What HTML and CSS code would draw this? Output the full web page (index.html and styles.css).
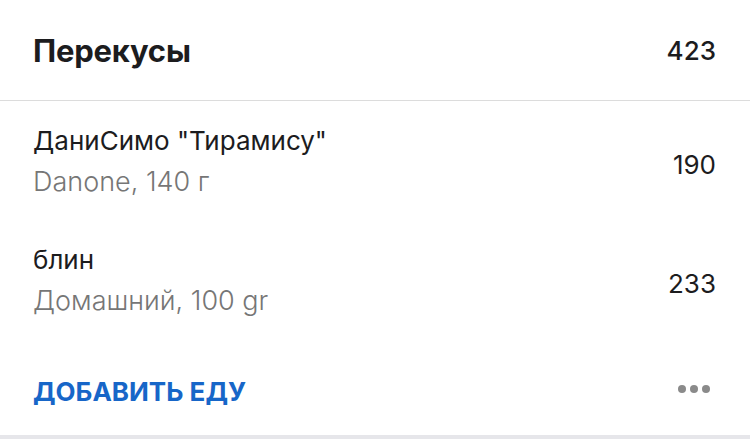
FILE: index.html
```html
<!DOCTYPE html>
<html lang="ru">
<head>
<meta charset="utf-8">
<link rel="stylesheet" href="styles.css">
</head>
<body>
<div class="card">
  <div class="header">
    <span class="meal-title">Перекусы</span>
    <span class="meal-total">423</span>
  </div>
  <div class="item">
    <div class="item-info">
      <div class="item-name">ДаниСимо "Тирамису"</div>
      <div class="item-meta">Danone, 140 г</div>
    </div>
    <div class="item-kcal">190</div>
  </div>
  <div class="item">
    <div class="item-info">
      <div class="item-name">блин</div>
      <div class="item-meta">Домашний, 100 gr</div>
    </div>
    <div class="item-kcal">233</div>
  </div>
  <div class="footer">
    <span class="add-food">ДОБАВИТЬ ЕДУ</span>
    <span class="more"><i></i><i></i><i></i></span>
  </div>
</div>
<div class="below"></div>
</body>
</html>
```

FILE: styles.css
```css
html, body {
  margin: 0;
  padding: 0;
  background: #efeff4;
}
body {
  font-family: Inter, "Noto Sans", "Liberation Sans", sans-serif;
  color: #1c1c1e;
}
.card {
  background: #fff;
  height: 435px;
}
.header {
  height: 101px;
  box-sizing: border-box;
  display: flex;
  align-items: center;
  justify-content: space-between;
  padding: 0 34px 0 33px;
  border-bottom: 1px solid #dcdcdc;
}
.meal-title {
  font-size: 31px;
  font-weight: 700;
  letter-spacing: -0.2px;
}
.meal-total {
  font-size: 26px;
  font-weight: 500;
}
.item {
  height: 119px;
  box-sizing: border-box;
  display: flex;
  align-items: center;
  justify-content: space-between;
  padding: 2px 34px 0 33px;
}
.item-name {
  font-size: 26px;
  line-height: 32px;
  margin-bottom: 9px;
}
.item-meta {
  font-size: 27px;
  line-height: 32px;
  color: #767676;
  font-weight: 350;
}
.item-kcal {
  font-size: 26px;
  line-height: 32px;
  padding-top: 6px;
}
.footer {
  height: 95px;
  box-sizing: border-box;
  display: flex;
  align-items: center;
  justify-content: space-between;
  padding: 10px 40px 0 33px;
}
.add-food {
  font-size: 26px;
  font-weight: 700;
  color: #1766c8;
}
.more {
  display: flex;
  gap: 4px;
  margin-top: -6px;
}
.more i {
  width: 8px;
  height: 8px;
  border-radius: 50%;
  background: #8a8a8a;
}
.below {
  height: 4px;
  background: #e6e6ea;
}
```
